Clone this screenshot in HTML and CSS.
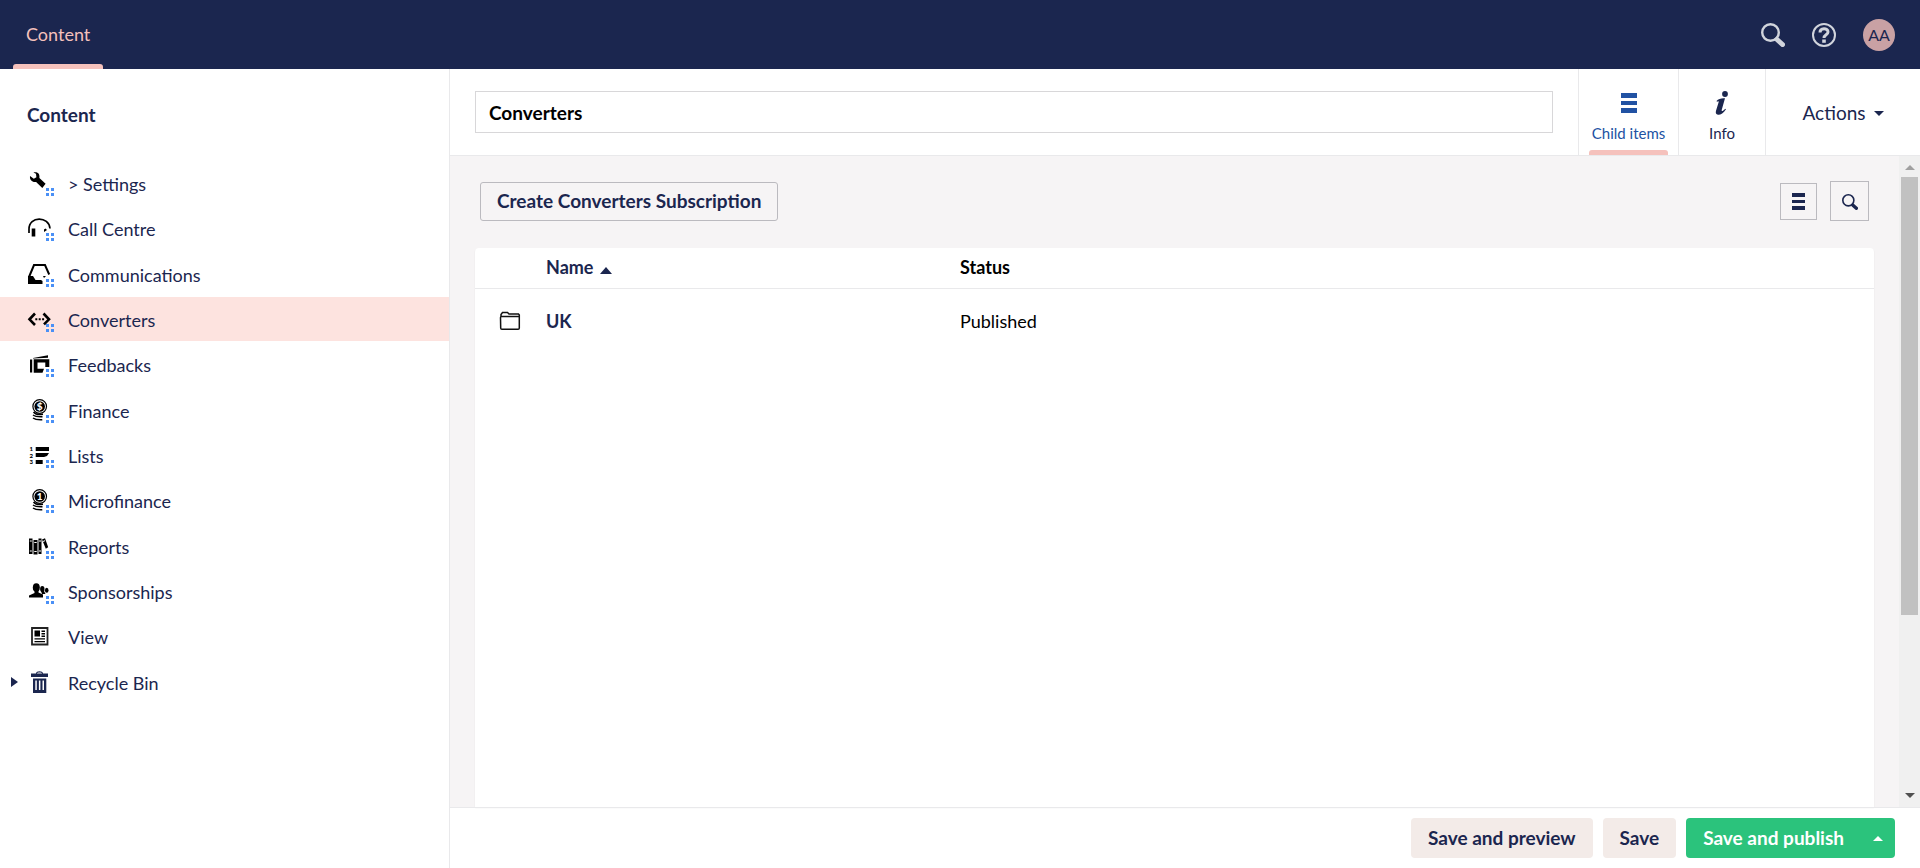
FILE: index.html
```html
<!DOCTYPE html>
<html lang="en">
<head>
<meta charset="utf-8">
<title>Converters</title>
<link rel="stylesheet" href="styles.css">
</head>
<body>
<svg class="sprite" aria-hidden="true">
  <symbol id="dots" viewBox="0 0 30 30"><path fill="#4a90f6" d="M20 20h3v3h-3zM25 20h3v3h-3zM20 25h3v3h-3zM25 25h3v3h-3z"/></symbol>
  <symbol id="magnifier" viewBox="0 0 24 24"><circle cx="9.500" cy="9.500" r="8.300" fill="none" stroke="currentColor" stroke-width="2.400"/><path d="M16 16.500l5.500 5" stroke="currentColor" stroke-width="5" stroke-linecap="round"/></symbol>
</svg>
<header class="topbar">
  <nav class="sections"><a class="section" href="#">Content</a></nav>
  <div class="tools">
    <button class="tool" aria-label="Search"><svg width="24" height="24"><use href="#magnifier"/></svg></button>
    <button class="tool" aria-label="Help"><svg width="24" height="24" viewBox="0 0 24 24" fill="none" stroke="currentColor"><circle cx="12" cy="12" r="11" stroke-width="2"/><path d="M8 9.600C8 4.600 16 4.700 16 9c0 2.800-4 2.700-4 6" stroke-width="3"/><path d="M12 16.500v3.300" stroke-width="3.600"/></svg></button>
    <button class="avatar">AA</button>
  </div>
</header>
<div class="workspace">
  <aside class="sidebar">
    <h2 class="tree-title">Content</h2>
    <ul class="tree">
      <li class="node"><svg class="icon" viewBox="0 0 30 30"><path d="M4 8l3.800 2.700 2.600-1.500L10 5.800 7.400 4.600c4-1.200 6.600 1 6 5.300l6.200 5.900-3.300 4.300-6.200-6.200C6.300 14.500 3.500 12 4 8z"/><use href="#dots"/></svg><a href="#">&gt; Settings</a></li>
      <li class="node"><svg class="icon" viewBox="0 0 30 30"><path d="M3 20v-4C3 2.800 23 2.800 24 15.500" fill="none" stroke="#000" stroke-width="1.700"/><path d="M5.700 15.500h3.600v8H5.700zM18 19v-2.500l1.500-1 1.500 1.500z"/><use href="#dots"/></svg><a href="#">Call Centre</a></li>
      <li class="node"><svg class="icon" viewBox="0 0 30 30"><path d="M3 18L8 6h11l4.200 9.500" fill="none" stroke="#000" stroke-width="2"/><path d="M2 17h5l2.500 4h5.500l1.500 1v3H2zM17 17h3l-2 2z"/><use href="#dots"/></svg><a href="#">Communications</a></li>
      <li class="node selected"><svg class="icon" viewBox="0 0 30 30"><path d="M9 9.500l-5.500 5.800L9 21M17.500 9.500l5.500 5.800-5 5" fill="none" stroke="#000" stroke-width="2.600"/><path d="M9.300 14.300h2v2h-2zM12.700 14.300h2v2h-2zM16.100 14.300h2v2h-2z"/><use href="#dots"/></svg><a href="#">Converters</a></li>
      <li class="node"><svg class="icon" viewBox="0 0 30 30"><path d="M4 10.500h2.200V23.500H4zM7 9l15-2.700v2.500L7 9.500zM7.700 10.300h15.600V18h-4v-4.500H11.500v6.200H18l-1.500 4H7.700z"/><use href="#dots"/></svg><a href="#">Feedbacks</a></li>
      <li class="node"><svg class="icon" viewBox="0 0 30 30"><g id="coin"><circle cx="13.700" cy="11.500" r="6.800" fill="none" stroke="#000" stroke-width="1.200"/><circle cx="13.700" cy="11.500" r="5.300"/><path d="M7.500 17c2 2.500 5 3 9.500 2.300M7 20c2 1.500 5 2 9.500 1.800M7 23c2 1.500 5 2 9.300 1.800" fill="none" stroke="#000" stroke-width="1.500"/></g><text class="coin-label" x="13.700" y="15">$</text><use href="#dots"/></svg><a href="#">Finance</a></li>
      <li class="node"><svg class="icon" viewBox="0 0 30 30"><path d="M9.700 7H23v4H9.700zM9.700 13H23l-2 3-3 1H9.700zM9.700 20h7v4h-7z"/><text class="list-label" x="3.500" y="11">1</text><text class="list-label" x="3.500" y="17.500">2</text><text class="list-label" x="3.500" y="24">3</text><use href="#dots"/></svg><a href="#">Lists</a></li>
      <li class="node"><svg class="icon" viewBox="0 0 30 30"><use href="#coin"/><text class="coin-label" x="13.700" y="15">1</text><use href="#dots"/></svg><a href="#">Microfinance</a></li>
      <li class="node"><svg class="icon" viewBox="0 0 30 30"><path d="M3 7.500h3.500v15.500H3zM7.500 9h4v14.500h-4zM12.500 7.500h3V23h-3zM16 8.500l3-1.300 3.200 9-2.400 1.500z"/><path d="M3.800 10h2M3.800 20h2M8.300 11.500h2.400M8.300 20.500h2.400M13 10h2M13 20h2M17 10.500l2-.8" stroke="#fff"/><use href="#dots"/></svg><a href="#">Reports</a></li>
      <li class="node"><svg class="icon" viewBox="0 0 30 30"><ellipse cx="10.300" cy="11.500" rx="3.500" ry="4.300"/><path d="M8.500 14h4v2.500l4.500 2v3H3v-2l5.500-2.500z"/><ellipse cx="16.300" cy="13" rx="2.200" ry="3"/><path d="M15 15h3l1.500 3H16z"/><ellipse cx="20.700" cy="14.200" rx="1.800" ry="2.500"/><use href="#dots"/></svg><a href="#">Sponsorships</a></li>
      <li class="node"><svg class="icon" viewBox="0 0 30 30"><path d="M6 7h15.500v16.500H6z" fill="none" stroke="#222" stroke-width="1.800"/><path d="M8.500 9.500H14v6H8.500zM15.500 9.500H19V11h-3.500zM15.500 12H19v1.500h-3.500zM15.500 14.500H19V16h-3.500zM8.500 17.300H19v1.300H8.500zM8.500 20H19v1.300H8.500z"/></svg><a href="#">View</a></li>
      <li class="node"><button class="expander" aria-label="Expand Recycle Bin"></button><svg class="icon navy" viewBox="0 0 30 30"><path fill-rule="evenodd" d="M5 6.500h5c0-3 7-3 7 0h5V10H5zM11 6.500h5c0-1.300-5-1.300-5 0zM7 11.500h13.300V26H7zM9.300 13.500V23h1.500v-9.500zM12.900 13.500V23h1.500v-9.500zM16.500 13.500V23H18v-9.500z"/></svg><a href="#">Recycle Bin</a></li>
    </ul>
  </aside>
  <main class="editor">
    <div class="editor-header">
      <input class="name-field" aria-label="Name" value="Converters">
      <nav class="apps">
        <button class="app active"><svg width="16" height="20" viewBox="0 0 16 20"><path fill="currentColor" d="M0 0h16v5H0zM0 8h16v4H0zM0 15h16v5H0z"/></svg><span>Child items</span></button>
        <button class="app info"><svg width="14" height="24" viewBox="0 0 14 24" fill="currentColor"><circle cx="10" cy="3" r="2.900"/><path d="M1.500 10c2-2.300 5-3 8.500-2.700L6.700 19c-.4 1.700 1 1.400 3.600-1.300l.7.600C8.300 22.500 5.300 24 3 23.700c-2-.3-2.600-1.800-2-4L3.700 11c.3-1-.5-1-1.700-.2z"/></svg><span>Info</span></button>
        <button class="actions">Actions<i class="caret down"></i></button>
      </nav>
    </div>
    <div class="editor-body">
      <div class="content">
        <div class="toolbar">
          <button class="create">Create Converters Subscription</button>
          <div class="view-tools">
            <button class="layout" aria-label="List layout"><svg width="13" height="17" viewBox="0 0 13 17"><path fill="currentColor" d="M0 0h13v4H0zM0 7h13v3H0zM0 13h13v4H0z"/></svg></button>
            <button class="filter" aria-label="Search items"><svg width="16" height="16"><use href="#magnifier"/></svg></button>
          </div>
        </div>
        <div class="card">
          <table class="items">
            <thead><tr><th class="icon-col"></th><th class="name-col">Name<i class="caret up sort"></i></th><th class="status-col">Status</th></tr></thead>
            <tbody><tr><td><svg class="folder" width="22" height="20" viewBox="0 0 22 20" fill="none" stroke="#111" stroke-width="1.500"><path d="M2 6V3.500L3.500 1.500h5L10 3h9.500l.8 1V17c0 .8-.4 1.300-1.200 1.300H2.900c-.8 0-1.200-.5-1.200-1.300L1.500 6.500c0-.6.500-1 1-1h17.300"/></svg></td><td><a href="#">UK</a></td><td>Published</td></tr></tbody>
          </table>
        </div>
      </div>
      <div class="scrollbar" aria-hidden="true"><i class="arrow-up"></i><div class="track"><div class="thumb"></div></div><i class="arrow-down"></i></div>
    </div>
    <footer class="editor-footer">
      <button class="btn">Save and preview</button>
      <button class="btn">Save</button>
      <div class="split"><button class="btn publish">Save and publish</button><button class="btn publish more" aria-label="More publishing options"><i class="caret up"></i></button></div>
    </footer>
  </main>
</div>
</body>
</html>
```
FILE: styles.css
```css
* { box-sizing: border-box; }
body { margin: 0; height: 100vh; display: flex; flex-direction: column; overflow: hidden; font: 18px/24px Lato, sans-serif; color: #1b264f; background: #fff; }
button { font: inherit; color: inherit; background: none; border: 0; padding: 0; margin: 0; display: flex; align-items: center; justify-content: center; white-space: nowrap; }
a { color: inherit; text-decoration: none; }
.sprite { position: absolute; width: 0; height: 0; }

.topbar { flex: none; height: 69px; display: flex; justify-content: space-between; background: #1b264f; padding: 0 25px 0 13px; }
.sections { display: flex; }
.section { display: flex; align-items: center; padding: 0 13px 2px; color: #f5c1bc; position: relative; }
.section::after { content: ""; position: absolute; left: 0; right: 0; bottom: 0; height: 5px; background: #f5c1bc; border-radius: 3px 3px 0 0; }
.tools { display: flex; align-items: center; gap: 27px; color: #d1d4dc; }
.tool { width: 24px; height: 24px; }
.avatar { width: 32px; height: 32px; border-radius: 50%; background: #c9a1a4; color: #1b264f; font-size: 16px; }

.workspace { flex: 1; min-height: 0; display: flex; }
.sidebar { flex: none; width: 450px; border-right: 1px solid #e9e9eb; }
.tree-title { margin: 0; padding: 34px 27px; font-size: 19px; line-height: 24px; font-weight: 700; }
.tree { list-style: none; margin: 0; padding: 0; min-height: 543px; display: grid; grid-auto-rows: 1fr; row-gap: 1px; }
.node { display: flex; align-items: center; gap: 12px; padding-left: 26px; position: relative; }
.node a { padding-top: 2px; }
.node.selected { background: #fde3df; }
.icon { width: 30px; height: 30px; flex: none; }
.icon.navy { fill: #1b264f; }
.coin-label { font: 900 10px Lato, sans-serif; fill: #fff; text-anchor: middle; }
.list-label { font: 900 6px Lato, sans-serif; }
.expander { position: absolute; left: 11px; border: 5px solid transparent; border-left: 7px solid #1b264f; border-right: 0; }

.editor { flex: 1; min-width: 0; display: flex; flex-direction: column; }
.editor-header { flex: none; height: 87px; display: flex; align-items: center; padding-left: 25px; gap: 25px; border-bottom: 1px solid #e9e9eb; }
.name-field { flex: 1; min-width: 0; height: 42px; border: 1px solid #d8d7d9; padding: 0 13px; font: 700 19px/24px Lato, sans-serif; color: #000; background: #fff; }
.apps { display: flex; align-self: stretch; }
.app { width: 100px; padding-top: 10px; flex-direction: column; gap: 8px; border-left: 1px solid #e9e9eb; font-size: 15px; line-height: 20px; position: relative; }
.app svg { height: 24px; }
.app.active { color: #2152a3; }
.app.active svg { height: 20px; margin: 2px 0; }
.app.active::after { content: ""; position: absolute; left: 10px; right: 10px; bottom: 0; height: 5px; border-radius: 3px 3px 0 0; background: #f5c1bc; }
.app.info { width: 87px; }
.actions { width: 155px; gap: 8px; border-left: 1px solid #e9e9eb; padding-top: 2px; font-size: 19px; }
.caret { border: 5px solid transparent; width: 0; height: 0; }
.caret.down { border-top-color: #1b264f; border-bottom: 0; }
.caret.up { border-bottom-color: currentColor; border-top: 0; }

.editor-body { flex: 1; min-height: 0; display: flex; background: #f6f4f5; }
.content { flex: 1; min-width: 0; padding: 25px 25px 0; display: flex; flex-direction: column; }
.toolbar { display: flex; align-items: center; justify-content: space-between; padding: 0 5px; margin-bottom: 27px; }
.create { height: 39px; padding: 0 16px; border: 1px solid #bbbabf; border-radius: 3px; font-size: 19px; font-weight: 700; }
.view-tools { display: flex; align-items: center; gap: 13px; }
.layout, .filter { border: 1px solid #bbbabf; width: 37px; height: 37px; }
.filter { width: 39px; height: 40px; padding-top: 2px; }
.card { flex: 1; background: #fff; border-radius: 4px 4px 0 0; box-shadow: 0 1px 1px rgba(0, 0, 0, .16); }
.items { width: 100%; border-collapse: collapse; table-layout: fixed; }
.items th { height: 40px; padding: 0 0 2px; text-align: left; font-weight: 700; border-bottom: 1px solid #e9e9eb; }
.items td { height: 66px; padding: 0; color: #000; }
.items a { color: #1b264f; font-weight: 700; }
.items .icon-col { width: 71px; }
.items .name-col { width: 414px; }
.items .status-col { color: #000; }
.sort { display: inline-block; margin-left: 7px; border-width: 6px; border-bottom-width: 7px; }
.folder { display: block; margin-left: 24px; }

.scrollbar { width: 21px; flex: none; background: #f0f0f0; display: flex; flex-direction: column; align-items: center; justify-content: space-between; padding: 9px 0; }
.arrow-up { border: 5px solid transparent; border-top: 0; border-bottom-color: #a0a0a0; }
.arrow-down { border: 5px solid transparent; border-bottom: 0; border-top-color: #505050; }
.track { flex: 1; width: 17px; margin: 7px 0; }
.thumb { height: 72%; background: #c1c1c1; }

.editor-footer { flex: none; height: 61px; border-top: 1px solid #e9e9eb; display: flex; align-items: center; justify-content: flex-end; gap: 10px; padding-right: 25px; }
.btn { height: 40px; padding: 0 17px; border-radius: 4px; background: #f3ebe8; font-size: 19px; font-weight: 700; }
.split { display: flex; }
.publish { background: #2bc37c; color: #fff; border-radius: 4px 0 0 4px; }
.more { border-radius: 0 4px 4px 0; padding: 0 12px; }
```
